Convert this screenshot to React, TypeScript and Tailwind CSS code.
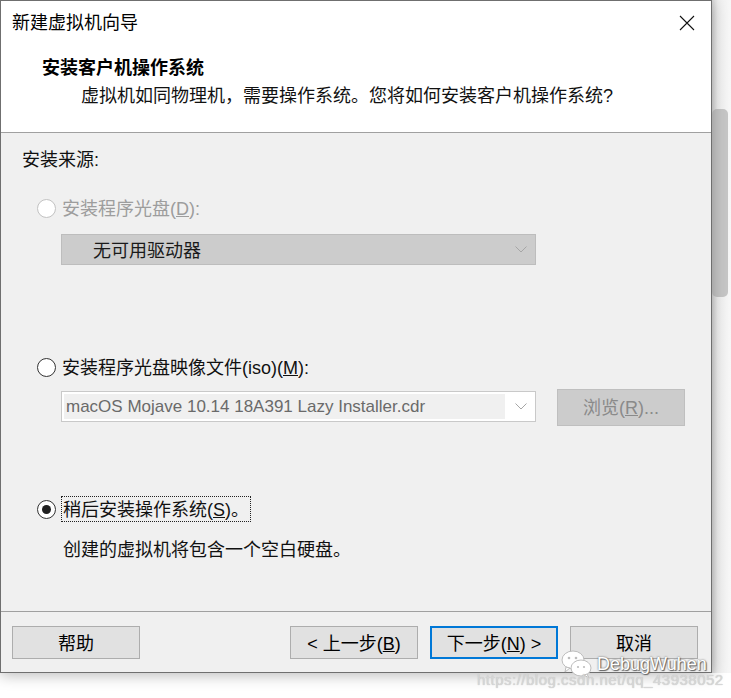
import React from "react";

const cjk = { fontFamily: '"Liberation Sans", "Noto Sans CJK SC", sans-serif' };

function Chevron() {
  return (
    <svg width="12" height="7" viewBox="0 0 12 7" className="shrink-0">
      <polyline points="0.5,0.5 6,6 11.5,0.5" fill="none" stroke="#a6a6a6" strokeWidth="1" />
    </svg>
  );
}

function Radio({ state }: { state: "disabled" | "off" | "on" }) {
  const border = state === "disabled" ? "border-[#c2c2c2]" : "border-[#333333]";
  return (
    <div className={`flex h-[19px] w-[19px] shrink-0 items-center justify-center rounded-full border bg-white ${border}`}>
      {state === "on" && <div className="h-[9px] w-[9px] rounded-full bg-[#1f1f1f]" />}
    </div>
  );
}

function Btn({ children, focused }: { children: React.ReactNode; focused?: boolean }) {
  return (
    <div
      className={`flex h-[33px] w-[128px] items-center justify-center bg-[#e1e1e1] pt-[3px] text-[18px] text-black ${
        focused ? "border-2 border-[#0078d7]" : "border border-[#adadad]"
      }`}
    >
      {children}
    </div>
  );
}

function WeChat() {
  return (
    <svg width="34" height="34" viewBox="0 0 34 34">
      <ellipse cx="13" cy="13" rx="11" ry="9" fill="#fff" stroke="#bdbdbd" strokeWidth="1" />
      <path d="M6 20 L5 25 L10 21 Z" fill="#fff" stroke="#bdbdbd" strokeWidth="1" />
      <ellipse cx="21" cy="21" rx="10" ry="8" fill="#fff" stroke="#bdbdbd" strokeWidth="1" />
      <path d="M27 27 L29 31 L24 28 Z" fill="#fff" stroke="#bdbdbd" strokeWidth="1" />
      <circle cx="9" cy="11" r="1.3" fill="#bdbdbd" />
      <circle cx="16" cy="11" r="1.3" fill="#bdbdbd" />
      <circle cx="18" cy="20" r="1.1" fill="#bdbdbd" />
      <circle cx="24" cy="20" r="1.1" fill="#bdbdbd" />
    </svg>
  );
}

export default function App() {
  return (
    <div className="relative flex h-[698px] w-[731px] items-start overflow-hidden bg-white" style={cjk}>
      <div className="relative z-10 flex h-[673px] w-[712px] shrink-0 flex-col border border-[#6f6f6f] bg-[#f0f0f0] shadow-[0_2px_14px_rgba(0,0,0,0.28)]">
        {/* header */}
        <div className="h-[132px] shrink-0 border-b border-[#a0a0a0] bg-white">
          <div className="flex h-[43px] items-center justify-between pl-[11px] pr-[16px]">
            <span className="text-[18px] leading-[24px] text-black">新建虚拟机向导</span>
            <svg width="16" height="16" viewBox="0 0 16 16">
              <path d="M1 1 L15 15 M15 1 L1 15" stroke="#111" strokeWidth="1.1" />
            </svg>
          </div>
          <div className="mt-[12px] pl-[41px] text-[18px] font-bold leading-[25px] text-black">安装客户机操作系统</div>
          <div className="mt-[3px] pl-[80px] text-[18px] leading-[25px] text-[#111]">
            虚拟机如同物理机，需要操作系统。您将如何安装客户机操作系统?
          </div>
        </div>

        {/* body */}
        <div className="flex h-[479px] shrink-0 flex-col border-b border-[#a0a0a0] pl-[21px]">
          <div className="mt-[15px] text-[18px] leading-[24px] text-[#111]">安装来源:</div>

          <div className="mt-[24px] flex h-[24px] items-center gap-[6px] pl-[15px]">
            <Radio state="disabled" />
            <span className="pt-[2px] text-[18px] text-[#9d9d9d]">
              安装程序光盘(<span className="underline">D</span>):
            </span>
          </div>

          <div className="ml-[39px] mt-[14px] flex h-[31px] w-[475px] items-center justify-between border border-[#bdbdbd] bg-[#cccccc] pl-[31px] pr-[8px]">
            <span className="pt-[3px] text-[18px] text-[#1a1a1a]">无可用驱动器</span>
            <Chevron />
          </div>

          <div className="mt-[90px] flex h-[24px] items-center gap-[6px] pl-[15px]">
            <Radio state="off" />
            <span className="pt-[2px] text-[18px] text-[#111]">
              安装程序光盘映像文件(iso)(<span className="underline">M</span>):
            </span>
          </div>

          <div className="ml-[39px] mt-[10px] flex items-start gap-[21px]">
            <div className="mt-[2px] flex h-[31px] w-[475px] items-center border border-[#c9c9c9] bg-white pl-[2px] pr-[8px]">
              <div className="flex h-[25px] w-[441px] items-center bg-[#f0f0f0] pl-[2px]">
                <span className="text-[17px] text-[#6a6a6a]" style={{ fontFamily: '"Liberation Sans", sans-serif' }}>
                  macOS Mojave 10.14 18A391 Lazy Installer.cdr
                </span>
              </div>
              <div className="flex flex-1 justify-end">
                <Chevron />
              </div>
            </div>
            <div className="flex h-[37px] w-[128px] items-center justify-center border border-[#bfbfbf] bg-[#cccccc] pt-[2px] text-[18px] text-[#8a8a8a]">
              浏览(<span className="underline">R</span>)...
            </div>
          </div>

          <div className="mt-[71px] flex h-[24px] items-center gap-[5px] pl-[15px]">
            <Radio state="on" />
            <span className="border border-dotted border-[#222] px-[1px] pt-[2px] text-[18px] leading-[22px] text-[#111]">
              稍后安装操作系统(<span className="underline">S</span>)。
            </span>
          </div>

          <div className="mt-[17px] pl-[41px] text-[18px] leading-[24px] text-[#111]">创建的虚拟机将包含一个空白硬盘。</div>
        </div>

        {/* footer */}
        <div className="flex flex-1 items-start gap-[12px] pl-[11px] pr-[13px] pt-[14px]">
          <Btn>帮助</Btn>
          <div className="flex-1" />
          <Btn>
            &lt; 上一步(<span className="underline">B</span>)
          </Btn>
          <Btn focused>
            下一步(<span className="underline">N</span>) &gt;
          </Btn>
          <Btn>取消</Btn>
        </div>
      </div>

      {/* background window edge with scrollbar */}
      <div className="h-[673px] w-[19px] shrink-0 bg-[linear-gradient(to_right,#d9d9d9,#efefef_30%,#f7f7f7)]">
        <div className="mt-[109px] h-[188px] w-[16px] rounded-[5px] bg-[#c6c6c6]" />
      </div>

      {/* watermark */}
      <div className="absolute left-[560px] top-[647px] z-20 flex items-center gap-[3px]">
        <WeChat />
        <span
          className="text-[18px] text-white [text-shadow:0_0_2px_#555,1px_1px_1px_#666]"
          style={{ fontFamily: '"Liberation Sans", sans-serif' }}
        >
          DebugWuhen
        </span>
      </div>
      <div
        className="absolute left-[477px] top-[671px] z-20 text-[15px] leading-[18px] tracking-[0.5px] text-[#d6d6d6] [text-shadow:0_0_1px_#bbb]"
        style={{ fontFamily: '"Liberation Sans", sans-serif' }}
      >
        https://blog.csdn.net/qq_43938052
      </div>
    </div>
  );
}
